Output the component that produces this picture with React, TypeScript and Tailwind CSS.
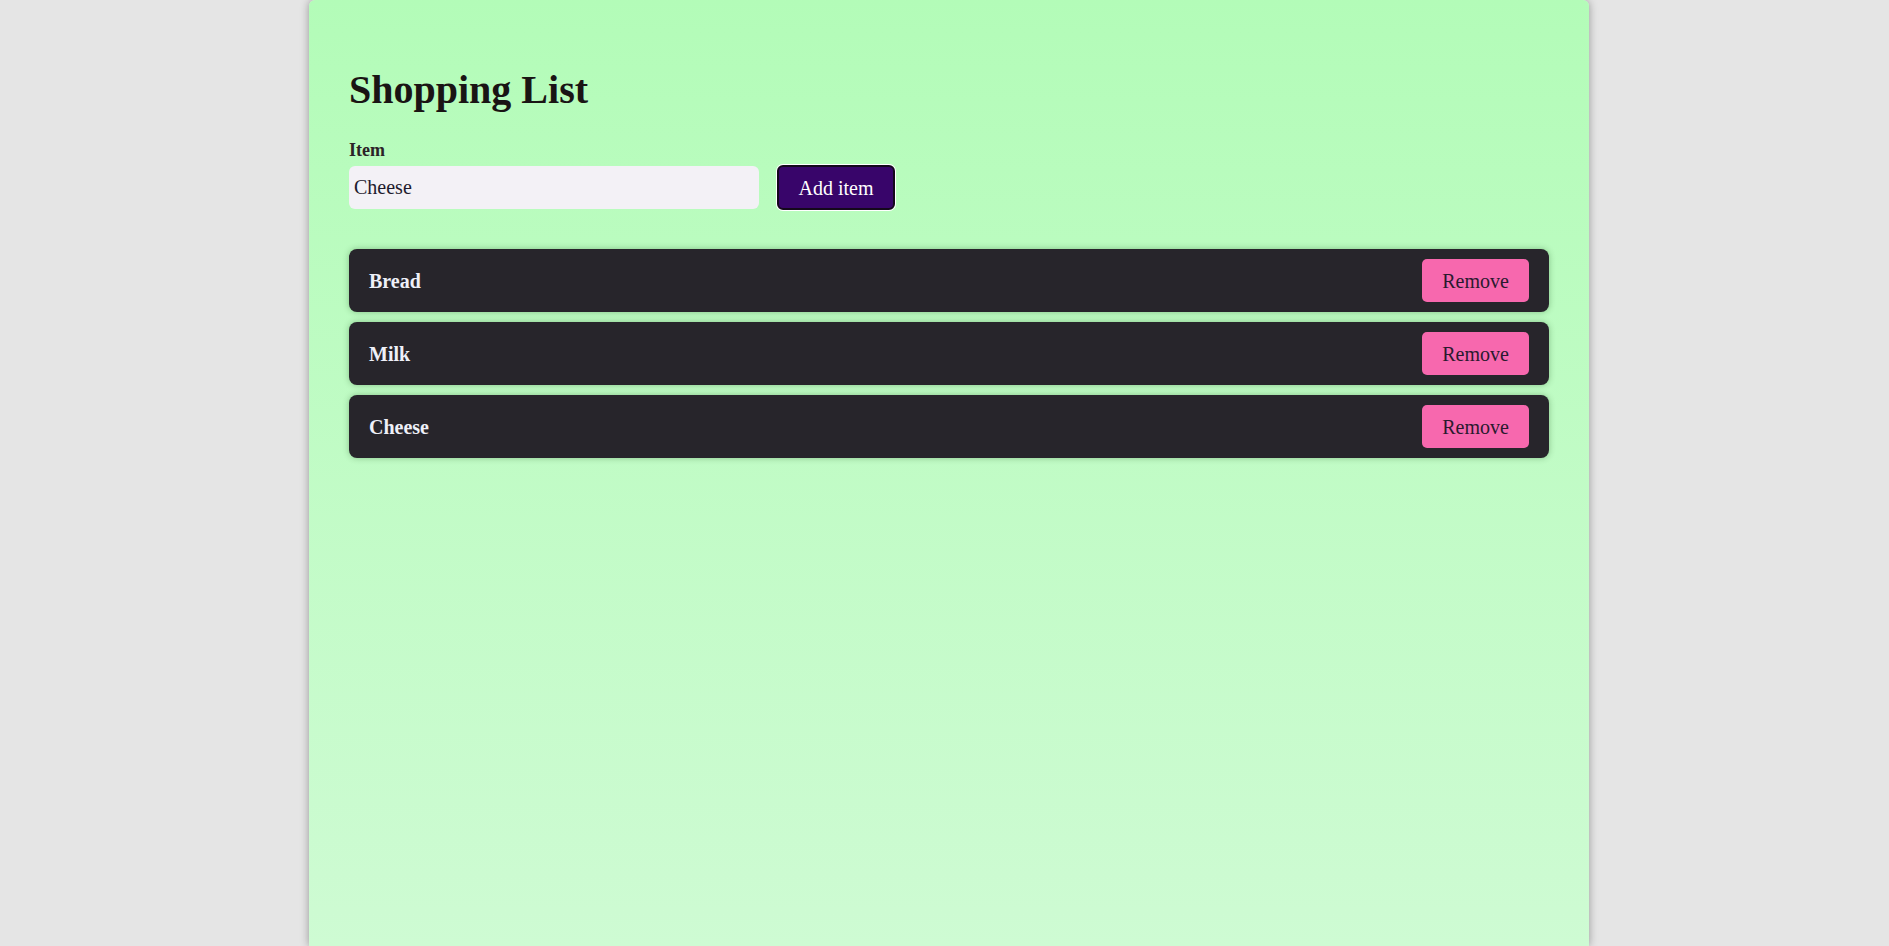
import { useState } from "react";

const App = () => {
  const [items, setItems] = useState<string[]>(["Bread", "Milk", "Cheese"]);
  const [value, setValue] = useState("Cheese");

  const addItem = () => {
    if (!value.trim()) return;
    setItems([...items, value.trim()]);
  };

  const removeItem = (idx: number) => {
    setItems(items.filter((_, i) => i !== idx));
  };

  return (
    <div
      className="h-screen overflow-hidden bg-[#e5e5e5] pl-[9px]"
      style={{ fontFamily: '"Liberation Serif", "Times New Roman", serif' }}
    >
      <div className="mx-auto h-[946px] w-[1280px] rounded-t-[6px] bg-gradient-to-b from-[#b3fcb8] to-[#cefbd3] px-[40px] pt-[40px] shadow-[0_0_8px_rgba(0,0,0,0.35)]">
        <h1 className="my-[27px] text-[40px] font-bold leading-[46px] text-[#1a1414]">
          Shopping List
        </h1>
        <label
          htmlFor="item"
          className="block text-[18px] font-bold leading-[21px] text-[#2b2327]"
        >
          Item
        </label>
        <div className="mt-[4px] flex items-center gap-[18px]">
          <input
            id="item"
            value={value}
            onChange={(e) => setValue(e.target.value)}
            className="h-[43px] w-[410px] rounded-[6px] bg-[#f3f1f6] px-[5px] text-[20px] text-[#1f1b2e] outline-none"
          />
          <button
            onClick={addItem}
            className="h-[45px] w-[118px] rounded-[6px] border-2 border-[#14081c] bg-[#38056a] text-[20px] text-white ring-1 ring-white"
          >
            Add item
          </button>
        </div>
        <ul className="mt-[39px] flex flex-col gap-[10px]">
          {items.map((item, idx) => (
            <li
              key={idx}
              className="flex h-[63px] items-center justify-between rounded-[8px] bg-[#27252b] pl-[20px] pr-[20px] shadow-[0_0_6px_rgba(0,60,0,0.3)]"
            >
              <span className="text-[20px] font-bold text-[#eef0f8]">{item}</span>
              <button
                onClick={() => removeItem(idx)}
                className="h-[43px] w-[107px] rounded-[5px] bg-[#f768ae] text-[20px] text-[#2a1a2e]"
              >
                Remove
              </button>
            </li>
          ))}
        </ul>
      </div>
    </div>
  );
};

export default App;
